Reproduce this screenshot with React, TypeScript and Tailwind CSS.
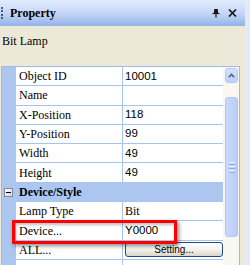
import type { ReactNode } from 'react'

interface Row {
  name: string
  value?: string
  sans?: boolean
  button?: string
}

const topRows: Row[] = [
  { name: 'Object ID', value: '10001', sans: true },
  { name: 'Name' },
  { name: 'X-Position', value: '118', sans: true },
  { name: 'Y-Position', value: '99', sans: true },
  { name: 'Width', value: '49', sans: true },
  { name: 'Height', value: '49', sans: true },
]

const styleRows: Row[] = [
  { name: 'Lamp Type', value: 'Bit' },
  { name: 'Device...', value: 'Y0000', sans: true },
  { name: 'ALL...', button: 'Setting...' },
  { name: '' },
]

function PropRow({ row }: { row: Row }) {
  let value: ReactNode = null
  if (row.button) {
    value = (
      <div className="flex h-[15px] w-[98px] items-center justify-center rounded-[3px] border border-[#1c4f8a] bg-gradient-to-b from-white via-[#f4f3ee] to-[#d9d6c8] font-['Liberation_Sans'] text-[10px] text-black">
        {row.button}
      </div>
    )
  } else if (row.value) {
    value = <span className={row.sans ? "font-['Liberation_Sans'] text-[11.5px]" : ''}>{row.value}</span>
  }
  return (
    <div className="flex h-[19.3px]">
      <div className="w-[14px] shrink-0 bg-[#abc6ef]" />
      <div className="flex w-[107px] shrink-0 items-center border-r border-b border-[#a9c3ec] bg-white pl-[3px]">{row.name}</div>
      <div className="flex flex-1 items-center border-b border-[#a9c3ec] bg-white pl-[2px]">{value}</div>
    </div>
  )
}

function Pin() {
  return (
    <svg width="8" height="9" viewBox="0 0 8 9" fill="none" stroke="#1a1a1a" strokeWidth="1">
      <path d="M2.5 0.5h3v3.5h-3z" fill="#1a1a1a" />
      <path d="M0.5 4.5h7" strokeWidth="1.2" />
      <path d="M4 4.5v4" strokeWidth="1.2" />
    </svg>
  )
}

function Close() {
  return (
    <svg width="9" height="8" viewBox="0 0 9 8" stroke="#1a1a1a" strokeWidth="1.7">
      <path d="M1 0.5l7 7M8 0.5l-7 7" />
    </svg>
  )
}

export default function App() {
  return (
    <div className="relative flex h-[265px] w-[250px] overflow-hidden bg-[#e2ebf8] font-['Liberation_Serif'] text-[12px] text-black">
      <div className="flex w-[245px] flex-col bg-[#ece9d8]">
        <div className="flex h-[26px] shrink-0 items-center bg-gradient-to-b from-[#e1ebfd] via-[#c6d8f6] to-[#93b2e8] pr-[8px]">
          <div className="ml-px flex h-[13px] w-[2px] flex-col justify-between">
            <div className="h-[2px] bg-[#3b5a94]" />
            <div className="h-[2px] bg-[#3b5a94]" />
            <div className="h-[2px] bg-[#3b5a94]" />
            <div className="h-[2px] bg-[#3b5a94]" />
          </div>
          <span className="ml-[7px] text-[12px] font-bold">Property</span>
          <div className="ml-auto flex items-center gap-[8px]">
            <Pin />
            <Close />
          </div>
        </div>

        <div className="h-[40px] shrink-0 pt-[8px] pl-[2px] leading-[14px]">Bit Lamp</div>

        <div className="ml-px flex w-[239px] flex-1 border-t border-r border-l border-[#9db9e4]">
          <div className="flex w-[221px] flex-col">
            {topRows.map((row) => (
              <PropRow key={row.name} row={row} />
            ))}
            <div className="flex h-[19.3px] items-center bg-[#abc6ef]">
              <div className="ml-[2px] flex h-[9px] w-[9px] items-center justify-center border border-[#7f8a9e] bg-gradient-to-br from-white to-[#d8d5cc]">
                <div className="h-px w-[5px] bg-black" />
              </div>
              <span className="ml-[6px] font-bold">Device/Style</span>
            </div>
            {styleRows.map((row, i) => (
              <PropRow key={i} row={row} />
            ))}
          </div>

          <div className="flex w-[16px] flex-col bg-[#f8f7f1] p-px pl-[2px]">
            <div className="flex h-[15px] items-center justify-center rounded-[3px] border border-[#b5c9f3] bg-gradient-to-b from-[#d3e1fd] to-[#bcd0fa]">
              <svg width="7" height="5" viewBox="0 0 7 5" fill="none" stroke="#4a5f86" strokeWidth="1.6">
                <path d="M0.8 4.2L3.5 1.4l2.7 2.8" />
              </svg>
            </div>
            <div className="h-[14px]" />
            <div className="flex h-[140px] items-center justify-center rounded-[3px] border border-[#b0c5f3] bg-gradient-to-r from-[#cad9fc] to-[#b9cdf8]">
              <div className="flex w-[6px] flex-col gap-px">
                <div className="h-px bg-[#eef4fe]" />
                <div className="h-px bg-[#8eaef0]" />
                <div className="h-px bg-[#eef4fe]" />
                <div className="h-px bg-[#8eaef0]" />
                <div className="h-px bg-[#eef4fe]" />
                <div className="h-px bg-[#8eaef0]" />
              </div>
            </div>
          </div>
        </div>
      </div>
      <div className="flex-1" />

      <div className="absolute top-[220px] left-[12px] h-[24px] w-[165px] border-[3px] border-[#ff0000] shadow-[inset_1px_2px_3px_rgba(0,0,0,0.25),2px_2px_4px_rgba(0,0,0,0.45)]" />
    </div>
  )
}
